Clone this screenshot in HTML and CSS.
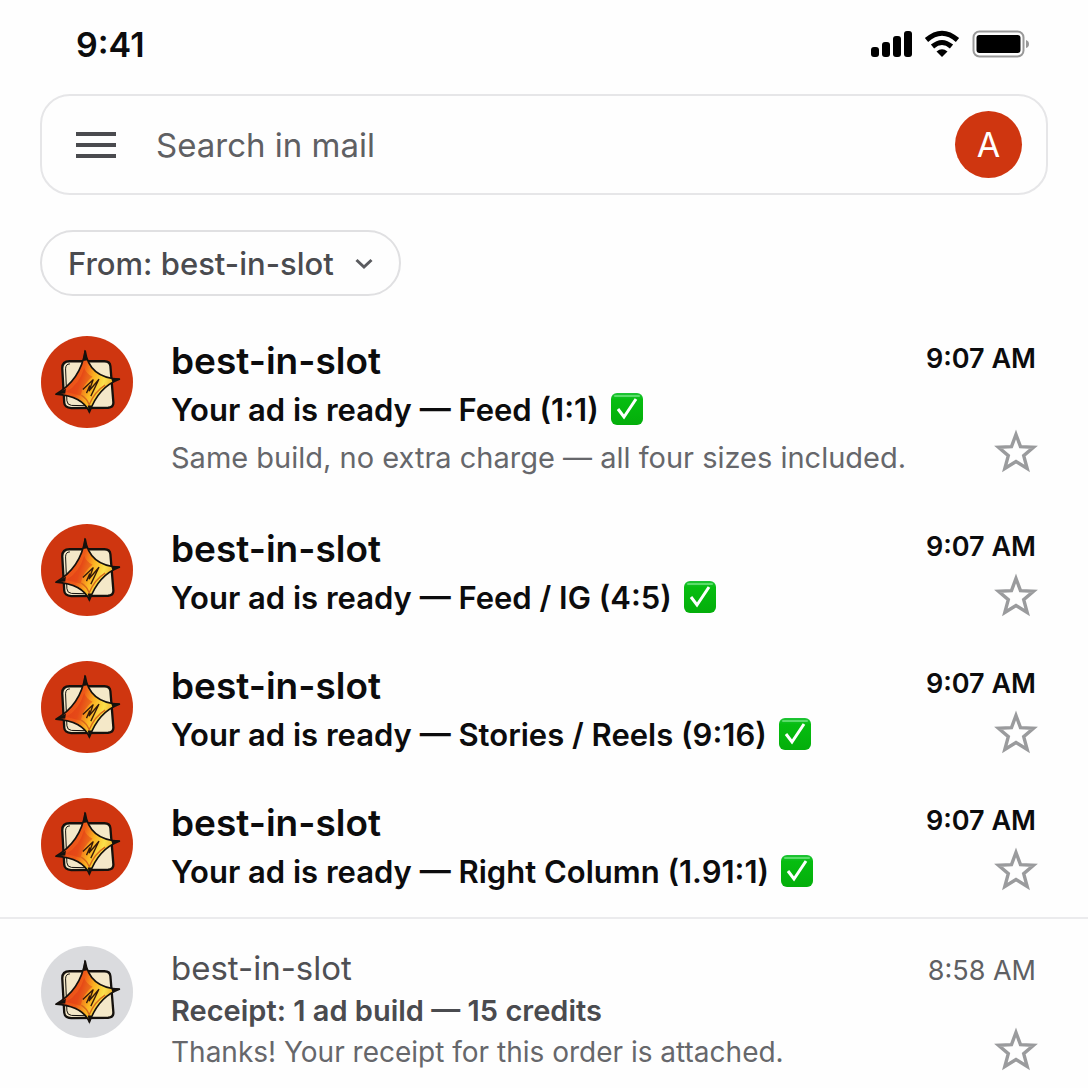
FILE: index.html
```
<!DOCTYPE html>
<html lang="en">
<head>
    <meta charset="UTF-8">
    <meta name="viewport" content="width=device-width, initial-scale=1">
    <title>Search in mail</title>
    <link rel="stylesheet" href="styles.css">
</head>
<body>

    <!-- Shared drawings -->
    <svg class="sprite" aria-hidden="true">
        <defs>
            <linearGradient id="flame" x1="0" y1="0.3" x2="1" y2="0.6">
                <stop offset="0.1" stop-color="#e8491b"/>
                <stop offset="0.4" stop-color="#ee5a18"/>
                <stop offset="0.58" stop-color="#fbb321"/>
                <stop offset="0.75" stop-color="#fbe04a"/>
                <stop offset="1" stop-color="#e88a1c"/>
            </linearGradient>
            <linearGradient id="green" x1="0" y1="0" x2="0" y2="1">
                <stop offset="0" stop-color="#1fc437"/>
                <stop offset="0.2" stop-color="#06bd10"/>
                <stop offset="1" stop-color="#04ae0b"/>
            </linearGradient>
        </defs>
        <symbol id="logo" viewBox="33 31 277 277">
            <path d="M119 107 L224 107 Q241 107 242 122 L251 232 Q251 246 235 247 L124 248 Q104 247 103 232 L97 128 Q97 107 119 107 Z" fill="#f4e8c8" stroke="#15110d" stroke-width="7"/>
            <path d="M120 115 Q107 115 107 130 L111 226 Q112 239 125 240 L177 241" fill="none" stroke="#15110d" stroke-width="3"/>
            <path d="M166 76 Q178 158 269 161 Q206 184 179 260 Q158 212 78 206 Q152 164 166 76 Z" fill="url(#flame)" stroke="#15110d" stroke-width="5" stroke-linejoin="round"/>
            <path d="M108 199 Q148 178 163 127 Q169 143 188 154 Q160 174 152 211 Z" fill="#dc3517" opacity="0.45"/>
            <path d="M154 209 Q170 218 178 238 Q195 198 226 179" fill="none" stroke="#d9691b" stroke-width="4"/>
            <path d="M174 240 L185 240 L178 267 Z M164 72 L173 104 L160 106 Z M75 207 L108 190 L106 204 Z M271 160 L244 157 L248 170 Z" fill="#15110d"/>
            <path d="M159 192 L190 163 L178 196 L207 162 L183 212 M170 203 L180 180" fill="none" stroke="#33180a" stroke-width="4" stroke-linejoin="round"/>
        </symbol>
        <symbol id="check" viewBox="0 0 32 32">
            <rect x="0" y="0" width="32" height="32" rx="6" fill="url(#green)"/>
            <path d="M4 3 H28" stroke="#5bdc6a" stroke-width="2" stroke-linecap="round"/>
            <path d="M7 16 L13 24 L25 6" fill="none" stroke="#fff" stroke-width="3"/>
        </symbol>
        <symbol id="star" viewBox="0 0 48 48">
            <path d="M24 6.500 L28.500 18.700 L41.500 19.300 L31.700 27.600 L35.200 40.500 L24 33.500 L12.800 40.500 L16.300 27.600 L6.500 19.300 L19.500 18.700 Z" fill="none" stroke="#9a9b9d" stroke-width="3.400"/>
        </symbol>
    </svg>

    <header>
        <div class="status-bar">
            <span class="clock">9:41</span>
            <div class="status-icons">
                <svg width="42" height="28" viewBox="0 0 42 28" aria-label="Signal">
                    <rect x="1" y="17" width="8" height="10" rx="3"/>
                    <rect x="12" y="12" width="8" height="15" rx="3"/>
                    <rect x="23" y="6" width="8" height="21" rx="3"/>
                    <rect x="34" y="1" width="8" height="26" rx="3"/>
                </svg>
                <svg width="36" height="28" viewBox="0 0 36 28" aria-label="Wi-Fi">
                    <path d="M2.500 10 Q18 -3.500 33.500 10 M8.500 16.500 Q18 8.500 27.500 16.500" fill="none" stroke="#000" stroke-width="5"/>
                    <path d="M12.500 21.500 Q18 17 23.500 21.500 L18 27 Z"/>
                </svg>
                <svg width="58" height="28" viewBox="0 0 58 28" aria-label="Battery">
                    <rect x="1.500" y="1.500" width="50" height="25" rx="6" fill="none" stroke="#999" stroke-width="2"/>
                    <rect x="4.500" y="5" width="44" height="18" rx="3"/>
                    <path d="M54 10 Q57 11 57 14 Q57 17 54 18 Z" fill="#999"/>
                </svg>
            </div>
        </div>

        <form class="search-bar" role="search">
            <button type="button" class="menu" aria-label="Menu">
                <svg width="40" height="28" viewBox="0 0 40 28">
                    <path d="M0 3 H40 M0 14 H40 M0 25 H40" stroke="#4a4b4f" stroke-width="4"/>
                </svg>
            </button>
            <input type="text" aria-label="Search in mail" placeholder="Search in mail">
            <button type="button" class="account" aria-label="Account">A</button>
        </form>

        <div class="filter">
            <select aria-label="Sender filter">
                <option>From: best-in-slot</option>
            </select>
            <svg class="chevron" width="18" height="12" viewBox="0 0 18 12" aria-hidden="true">
                <path d="M1.500 2 L9 9 L16.500 2" fill="none" stroke="#5a5b5f" stroke-width="3"/>
            </svg>
        </div>
    </header>

    <main>
        <ul class="mail-list">
            <li class="mail long">
                <svg class="avatar"><use href="#logo"/></svg>
                <div class="content">
                    <h2>best-in-slot</h2>
                    <p class="subject">Your ad is ready — Feed (1:1) <svg class="check"><use href="#check"/></svg></p>
                    <p class="preview">Same build, no extra charge — all four sizes included.</p>
                </div>
                <div class="side">
                    <time>9:07 AM</time>
                    <button type="button" aria-label="Star"><svg><use href="#star"/></svg></button>
                </div>
            </li>
            <li class="mail">
                <svg class="avatar"><use href="#logo"/></svg>
                <div class="content">
                    <h2>best-in-slot</h2>
                    <p class="subject">Your ad is ready — Feed / IG (4:5) <svg class="check"><use href="#check"/></svg></p>
                </div>
                <div class="side">
                    <time>9:07 AM</time>
                    <button type="button" aria-label="Star"><svg><use href="#star"/></svg></button>
                </div>
            </li>
            <li class="mail">
                <svg class="avatar"><use href="#logo"/></svg>
                <div class="content">
                    <h2>best-in-slot</h2>
                    <p class="subject">Your ad is ready — Stories / Reels (9:16) <svg class="check"><use href="#check"/></svg></p>
                </div>
                <div class="side">
                    <time>9:07 AM</time>
                    <button type="button" aria-label="Star"><svg><use href="#star"/></svg></button>
                </div>
            </li>
            <li class="mail">
                <svg class="avatar"><use href="#logo"/></svg>
                <div class="content">
                    <h2>best-in-slot</h2>
                    <p class="subject">Your ad is ready — Right Column (1.91:1) <svg class="check"><use href="#check"/></svg></p>
                </div>
                <div class="side">
                    <time>9:07 AM</time>
                    <button type="button" aria-label="Star"><svg><use href="#star"/></svg></button>
                </div>
            </li>
            <li class="mail read">
                <svg class="avatar"><use href="#logo"/></svg>
                <div class="content">
                    <h2>best-in-slot</h2>
                    <p class="subject">Receipt: 1 ad build — 15 credits</p>
                    <p class="preview">Thanks! Your receipt for this order is attached.</p>
                </div>
                <div class="side">
                    <time>8:58 AM</time>
                    <button type="button" aria-label="Star"><svg><use href="#star"/></svg></button>
                </div>
            </li>
        </ul>
    </main>

</body>
</html>
```
FILE: styles.css
```
* {
    box-sizing: border-box;
}

body {
    margin: 0;
    background-color: #fefefe;
    font-family: Inter, "Liberation Sans", sans-serif;
    color: #0c0c0d;
}

button, input, select {
    font-family: inherit;
    background: none;
    border: none;
    padding: 0;
    margin: 0;
}

button {
    cursor: pointer;
}

.sprite {
    display: block;
    width: 0;
    height: 0;
}

header {
    padding: 0 40px;
}

/* Status bar */
.status-bar {
    display: flex;
    justify-content: space-between;
    align-items: center;
    height: 88px;
    padding: 0 18px 0 36px;
}

.clock {
    font-size: 34px;
    font-weight: 600;
}

.status-icons {
    display: flex;
    align-items: center;
    gap: 12px;
}

/* Search */
.search-bar {
    display: flex;
    align-items: center;
    height: 101px;
    margin-top: 6px;
    padding: 0 24px 0 34px;
    border: 2px solid #e6e6e8;
    border-radius: 30px;
}

.menu {
    display: flex;
}

.search-bar input {
    flex: 1;
    min-width: 0;
    margin: 0 40px;
    font-size: 33px;
    color: #5f6063;
    outline: none;
}

.search-bar input::placeholder {
    color: #5f6063;
    opacity: 1;
}

.account {
    width: 67px;
    height: 67px;
    border-radius: 50%;
    background-color: #cf3610;
    color: #fff;
    font-size: 34px;
}

.filter {
    position: relative;
    display: inline-block;
    margin-top: 35px;
}

.filter select {
    display: block;
    appearance: none;
    height: 66px;
    padding: 0 65px 0 26px;
    border: 2px solid #e0e0e2;
    border-radius: 33px;
    font-size: 31px;
    font-weight: 500;
    color: #4a4b4f;
}

.chevron {
    position: absolute;
    right: 28px;
    top: 28px;
    pointer-events: none;
}

/* Mail list */
.mail-list {
    list-style: none;
    margin: 0;
    padding: 20px 0 0;
}

.mail {
    display: flex;
    padding: 20px 52px 19px 41px;
}

.avatar {
    flex: none;
    width: 92px;
    height: 92px;
    border-radius: 50%;
    background-color: #cf3610;
}

.content {
    flex: 1;
    min-width: 0;
    margin-left: 38px;
}

h2, p {
    margin: 0;
}

h2 {
    font-size: 37px;
    font-weight: 600;
    line-height: 50px;
}

.subject {
    font-size: 31px;
    font-weight: 600;
    line-height: 48px;
}

.check {
    width: 32px;
    height: 32px;
    margin-left: 4px;
    vertical-align: -4px;
}

.preview {
    font-size: 29px;
    line-height: 48px;
    color: #66676b;
}

.side {
    display: flex;
    flex-direction: column;
    align-items: flex-end;
    justify-content: space-between;
}

time {
    font-size: 27px;
    font-weight: 600;
    line-height: 46px;
    white-space: nowrap;
}

.side button {
    display: flex;
    margin: 0 -4px 2px 0;
}

.side button svg {
    width: 48px;
    height: 48px;
}

.mail.long {
    padding-bottom: 22px;
}

.mail.long .side button {
    margin-bottom: 6px;
}

.mail.read {
    margin-top: 2px;
    padding-top: 27px;
    padding-bottom: 16px;
    border-top: 2px solid #ebebed;
}

.read .avatar {
    background-color: #dadbde;
}

.read h2 {
    font-size: 33px;
    font-weight: 400;
    line-height: 44px;
    color: #4f5054;
}

.read .subject {
    font-size: 29px;
    line-height: 42px;
    color: #4a4b4f;
}

.read .preview {
    font-size: 28px;
    line-height: 40px;
}

.read time {
    font-weight: 400;
    line-height: 50px;
    color: #5f6063;
}

.mail.read .side button {
    margin-bottom: -2px;
}
```
